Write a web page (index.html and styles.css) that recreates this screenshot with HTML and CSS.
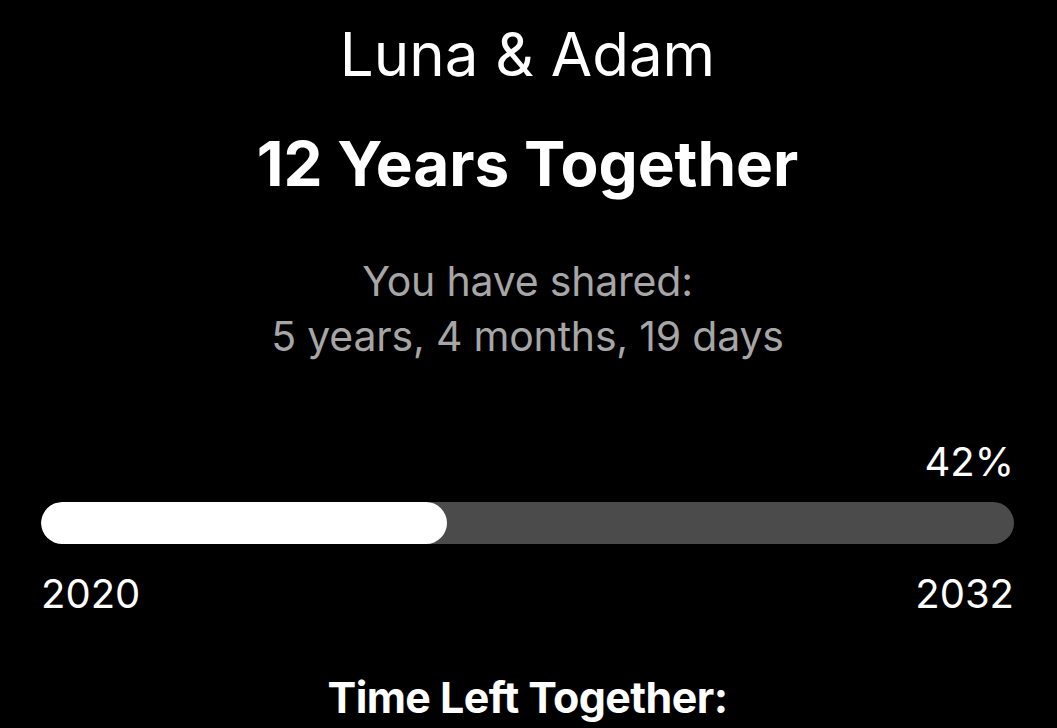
FILE: index.html
```html
<!DOCTYPE html>
<html lang="en">
<head>
    <meta charset="utf-8">
    <meta name="viewport" content="width=device-width, initial-scale=1.0">
    <title>Luna &amp; Adam</title>
    <link rel="stylesheet" href="styles.css">
</head>
<body>
    <div id="page">
        <h1 class="names">Luna &amp; Adam</h1>
        <h2 class="together">12 Years Together</h2>

        <p class="shared">
            You have shared:<br>
            5 years, 4 months, 19 days
        </p>

        <div class="percent">42%</div>
        <div class="bar">
            <div class="bar-fill" style="width: 41.7%"></div>
        </div>
        <div class="range">
            <span>2020</span>
            <span>2032</span>
        </div>

        <h3 class="left">Time Left Together:</h3>
    </div>
</body>
</html>
```

FILE: styles.css
```css
html, body {
    margin: 0;
    background: #000;
}
body {
    font-family: Inter, "Noto Sans", sans-serif;
    color: #fff;
    overflow: hidden;
    height: 728px;
}
#page {
    display: flex;
    flex-direction: column;
    padding: 17px 43px 0 41px;
    text-align: center;
}
h1, h2, h3, p {
    margin: 0;
}
.names {
    font-size: 60px;
    line-height: 74px;
    font-weight: 400;
}
.together {
    margin-top: 36px;
    font-size: 62px;
    line-height: 74px;
    font-weight: 700;
}
.shared {
    margin-top: 53px;
    font-size: 41px;
    line-height: 55px;
    letter-spacing: -0.2px;
    color: #a6a6a6;
}
.percent {
    margin-top: 74px;
    font-size: 40px;
    line-height: 47px;
    text-align: right;
}
.bar {
    margin-top: 17px;
    height: 42px;
    border-radius: 21px;
    background: #4b4b4b;
    overflow: hidden;
}
.bar-fill {
    height: 100%;
    border-radius: 21px;
    background: #fff;
}
.range {
    margin-top: 26px;
    display: flex;
    justify-content: space-between;
    font-size: 40px;
    line-height: 47px;
}
.left {
    margin-top: 53px;
    font-size: 43px;
    line-height: 54px;
    letter-spacing: -0.6px;
    font-weight: 700;
}
```
